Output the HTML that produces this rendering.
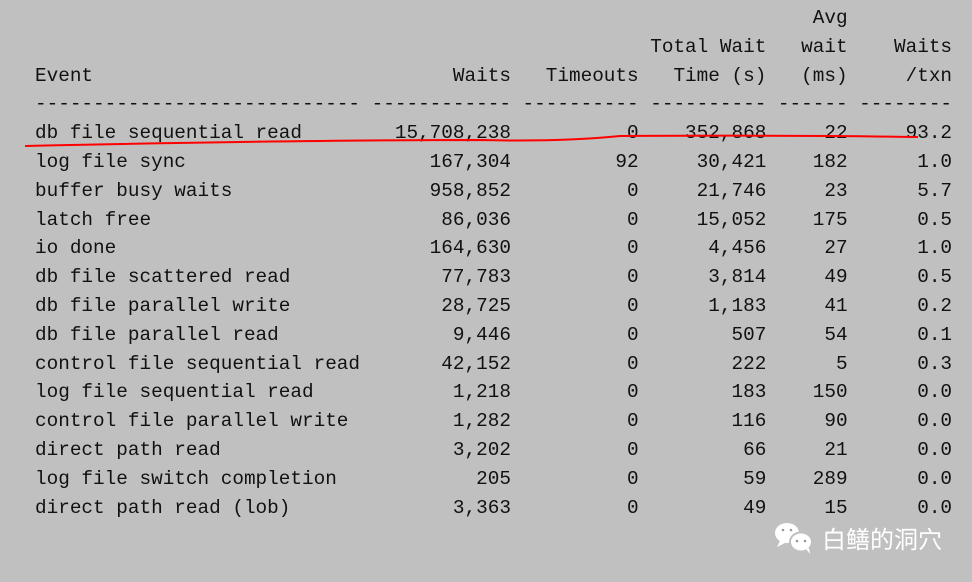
<!DOCTYPE html>
<html><head><meta charset="utf-8"><style>
body{margin:0;background:#c0c0c0;width:972px;height:582px;overflow:hidden;position:relative}
pre{position:absolute;left:35px;top:4px;margin:0;font-family:"Liberation Mono",monospace;font-size:19.35px;line-height:28.8px;color:#111}
.wm{position:absolute;left:822px;top:522px;font-family:"Noto Sans CJK SC",sans-serif;font-size:24px;color:#fff;line-height:32px}
</style></head><body>
<pre>                                                                   Avg
                                                     Total Wait   wait    Waits
Event                               Waits   Timeouts   Time (s)   (ms)     /txn
---------------------------- ------------ ---------- ---------- ------ --------
db file sequential read        15,708,238          0    352,868     22     93.2
log file sync                     167,304         92     30,421    182      1.0
buffer busy waits                 958,852          0     21,746     23      5.7
latch free                         86,036          0     15,052    175      0.5
io done                           164,630          0      4,456     27      1.0
db file scattered read             77,783          0      3,814     49      0.5
db file parallel write             28,725          0      1,183     41      0.2
db file parallel read               9,446          0        507     54      0.1
control file sequential read       42,152          0        222      5      0.3
log file sequential read            1,218          0        183    150      0.0
control file parallel write         1,282          0        116     90      0.0
direct path read                    3,202          0         66     21      0.0
log file switch completion            205          0         59    289      0.0
direct path read (lob)              3,363          0         49     15      0.0</pre>
<svg width="972" height="582" style="position:absolute;left:0;top:0">
<path d="M25 146 Q300 140 480 140 Q560 142 620 136 Q800 135 918 137" stroke="#f00" stroke-width="2" fill="none"/>
<ellipse cx="787" cy="533" rx="12" ry="10" fill="#fff"/>
<path d="M780 541 l-3 6 l8 -4z" fill="#fff"/>
<ellipse cx="801" cy="542" rx="11" ry="9.5" fill="#fff" stroke="#c0c0c0" stroke-width="2"/>
<path d="M806 549 l4 5 l-1 -6z" fill="#fff"/>
<circle cx="783" cy="530" r="1.3" fill="#999"/><circle cx="791" cy="530" r="1.3" fill="#999"/>
<circle cx="797" cy="541" r="1.3" fill="#999"/><circle cx="805" cy="541" r="1.3" fill="#999"/>
</svg>
<div class="wm">白鳝的洞穴</div>
</body></html>
